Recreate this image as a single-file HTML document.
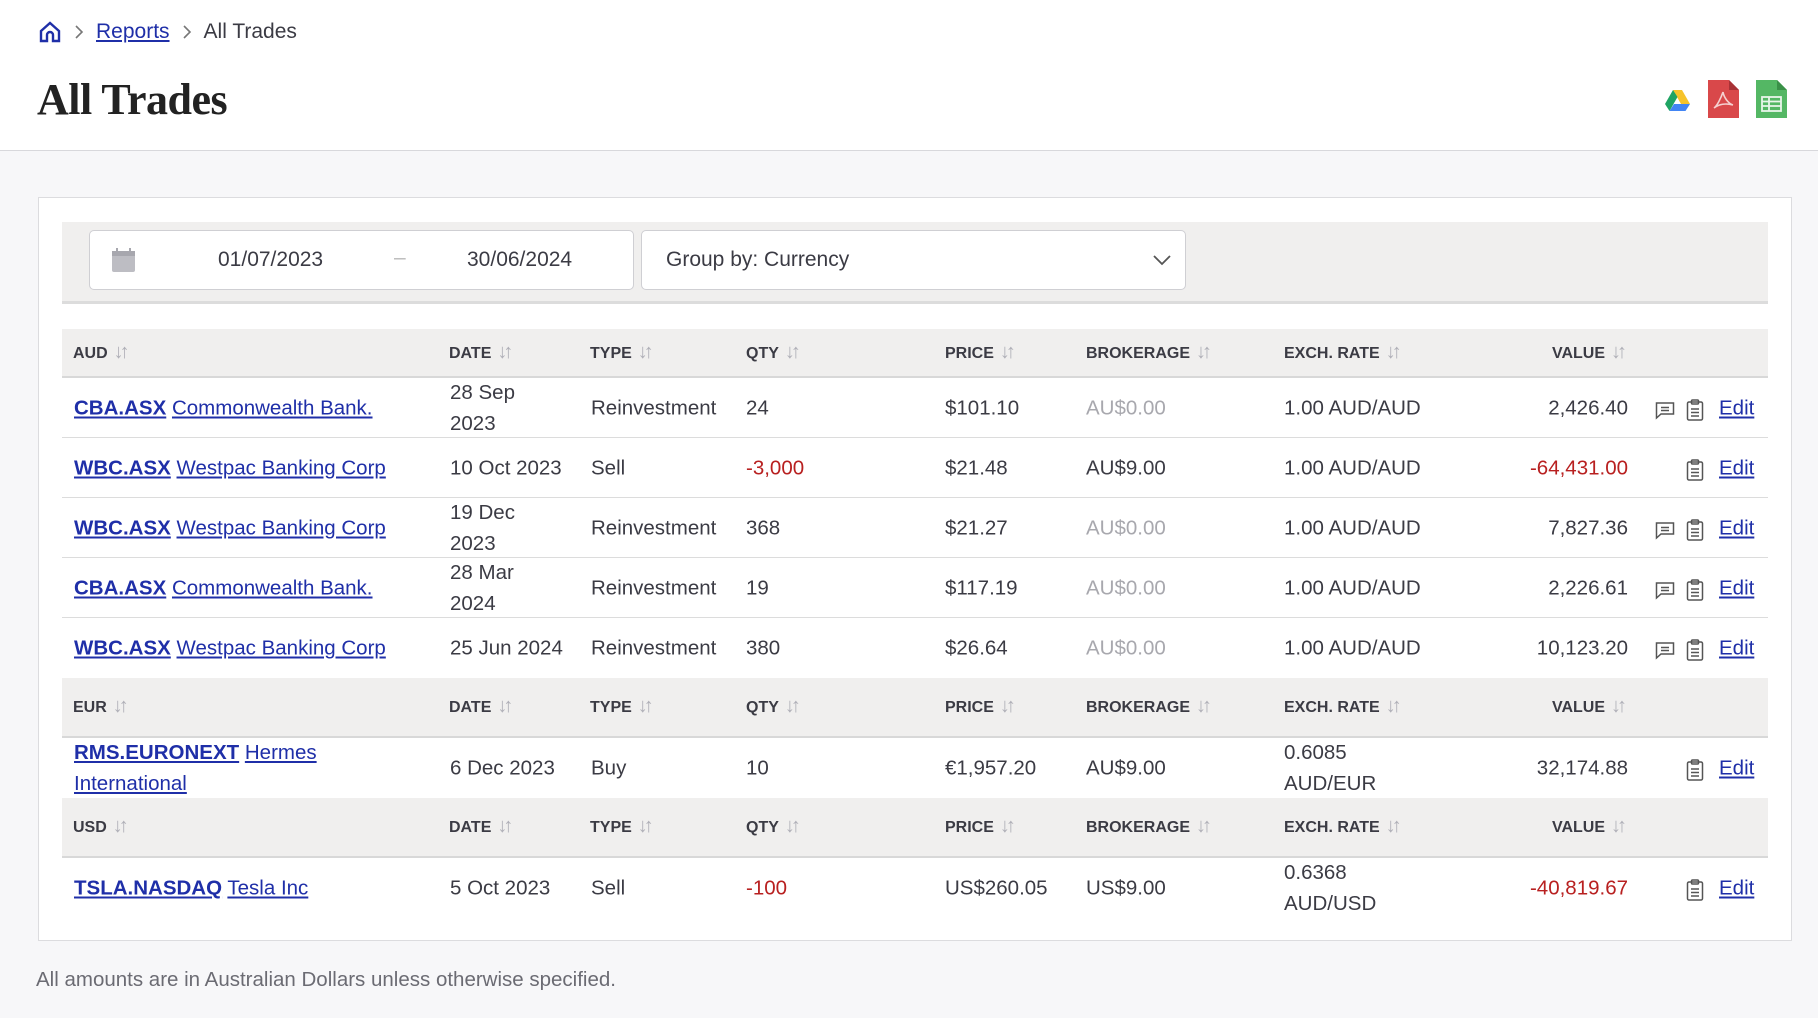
<!DOCTYPE html>
<html><head><meta charset="utf-8"><style>
*{box-sizing:border-box;margin:0;padding:0}
body{width:1818px;height:1018px;background:#f7f7f9;font-family:"Liberation Sans",sans-serif;color:#3b3b44;position:relative;overflow:hidden}
.top{position:absolute;left:0;top:0;width:1818px;height:151px;background:#fff;border-bottom:1px solid #d8d8dc}
.bc{position:absolute;left:38px;top:20px;font-size:21px;display:flex;align-items:center;gap:12px;color:#3b3b44}
a{color:#1f2fa8;text-decoration:underline}
h1{position:absolute;left:37px;top:74px;font-family:"Liberation Serif",serif;font-size:44px;font-weight:bold;color:#222;letter-spacing:-0.5px}
.card{position:absolute;left:38px;top:197px;width:1754px;height:744px;background:#fff;border:1px solid #dcdcdf}
.fbar{position:absolute;left:23px;top:24px;width:1706px;height:82px;background:#f0efee;border-bottom:3px solid #dcdcdc}
.inp{position:absolute;top:8px;height:60px;background:#fff;border:1px solid #cfcfd3;border-radius:5px;font-size:21px;color:#3b3b44}
.row{position:absolute;left:23px;width:1706px;font-size:20.5px;color:#3b3b44}
.hd{background:#f0efee;border-bottom:2px solid #d8d8d8;font-size:16px;font-weight:bold;color:#3b3b44}
.dr{border-bottom:1px solid #dcdcdc;background:#fff}
.c{position:absolute;top:50%;transform:translateY(-50%);line-height:31px}
.s{color:#b0b0b8;font-weight:normal;font-size:20px;margin-left:6px;letter-spacing:-4px}
.red{color:#b82020}.muted{color:#a8a8ae}
.r{text-align:right}
b a{font-weight:bold}
</style></head><body>
<div class="top">
<div class="bc"><svg width="24" height="24" viewBox="0 0 24 24" fill="none" stroke="#1f2fa8" stroke-width="2.4"><path d="M3 11L12 3l9 8v10h-6v-6a3 3 0 0 0-6 0v6H3z"/></svg><svg width="10" height="16" viewBox="0 0 10 16" fill="none" stroke="#777" stroke-width="1.6"><path d="M2 2l6 6-6 6"/></svg><a>Reports</a><svg width="10" height="16" viewBox="0 0 10 16" fill="none" stroke="#777" stroke-width="1.6"><path d="M2 2l6 6-6 6"/></svg><span>All Trades</span></div>
<h1>All Trades</h1>
<svg style="position:absolute;left:1665px;top:90px" width="25" height="22" viewBox="0 0 25 22"><path d="M8 0h9l8 14h-9z" fill="#f6c32a"/><path d="M8 0L0 14l4.5 7L12.5 7z" fill="#1fa463"/><path d="M4.5 21h16l4.5-7H9z" fill="#4285f4"/></svg>
<svg style="position:absolute;left:1708px;top:80px" width="31" height="38" viewBox="0 0 31 38"><path d="M0 0h21l10 10v28H0z" fill="#d9484a"/><path d="M21 0v10h10z" fill="#a83236"/><path d="M15 12c-2 6-6 14-9 16M15 12c1 6 6 12 10 13M6 28c5-4 12-5 19-3" stroke="#f5d0d0" stroke-width="1.6" fill="none"/></svg>
<svg style="position:absolute;left:1756px;top:80px" width="31" height="38" viewBox="0 0 31 38"><path d="M0 0h21l10 10v28H0z" fill="#54b764"/><path d="M21 0v10h10z" fill="#3a9148"/><rect x="6" y="17" width="19" height="14" fill="none" stroke="#e8f5ea" stroke-width="1.8"/><path d="M6 21.5h19M6 26h19M13 17v14" stroke="#e8f5ea" stroke-width="1.8"/></svg>
</div>
<div class="card">
<div class="fbar">
<div class="inp" style="left:27px;width:545px">
<svg style="position:absolute;left:22px;top:17px" width="23" height="24" viewBox="0 0 23 24"><rect x="0" y="3" width="23" height="21" rx="2" fill="#bdbdc3"/><rect x="0" y="3" width="23" height="5" fill="#a7a7ae"/><rect x="4" y="0" width="2" height="5" fill="#a7a7ae"/><rect x="17" y="0" width="2" height="5" fill="#a7a7ae"/></svg>
<span style="position:absolute;left:128px;top:17px">01/07/2023</span>
<span style="position:absolute;left:304px;top:15px;color:#bbb">–</span>
<span style="position:absolute;left:377px;top:17px">30/06/2024</span></div>
<div class="inp" style="left:579px;width:545px"><span style="position:absolute;left:24px;top:17px">Group by: Currency</span>
<svg style="position:absolute;right:14px;top:24px" width="18" height="11" viewBox="0 0 18 11" fill="none" stroke="#555" stroke-width="1.8"><path d="M1 1l8 8 8-8"/></svg></div>
</div>
<div class="row hd" style="top:131px;height:49px"><span class="c" style="left:11px">AUD<span class="s">↓↑</span></span><span class="c" style="left:387px">DATE<span class="s">↓↑</span></span><span class="c" style="left:528px">TYPE<span class="s">↓↑</span></span><span class="c" style="left:684px">QTY<span class="s">↓↑</span></span><span class="c" style="left:883px">PRICE<span class="s">↓↑</span></span><span class="c" style="left:1024px">BROKERAGE<span class="s">↓↑</span></span><span class="c" style="left:1222px">EXCH. RATE<span class="s">↓↑</span></span><span class="c r" style="right:145px">VALUE<span class="s">↓↑</span></span></div>

<div class="row dr" style="top:180px;height:60px"><span class="c" style="left:12px"><b><a>CBA.ASX</a></b> <a>Commonwealth Bank.</a></span><span class="c" style="left:388px">28 Sep<br>2023</span><span class="c" style="left:529px">Reinvestment</span><span class="c" style="left:684px">24</span><span class="c" style="left:883px">$101.10</span><span class="c muted" style="left:1024px">AU$0.00</span><span class="c" style="left:1222px">1.00 AUD/AUD</span><span class="c" style="right:140px">2,426.40</span><span class="c" style="left:1593px">CM</span><span class="c" style="left:1624px">CB</span><span class="c" style="left:1657px"><a>Edit</a></span></div>
<div class="row dr" style="top:240px;height:60px"><span class="c" style="left:12px"><b><a>WBC.ASX</a></b> <a>Westpac Banking Corp</a></span><span class="c" style="left:388px">10 Oct 2023</span><span class="c" style="left:529px">Sell</span><span class="c red" style="left:684px">-3,000</span><span class="c" style="left:883px">$21.48</span><span class="c" style="left:1024px">AU$9.00</span><span class="c" style="left:1222px">1.00 AUD/AUD</span><span class="c red" style="right:140px">-64,431.00</span><span class="c" style="left:1624px">CB</span><span class="c" style="left:1657px"><a>Edit</a></span></div>
<div class="row dr" style="top:300px;height:60px"><span class="c" style="left:12px"><b><a>WBC.ASX</a></b> <a>Westpac Banking Corp</a></span><span class="c" style="left:388px">19 Dec<br>2023</span><span class="c" style="left:529px">Reinvestment</span><span class="c" style="left:684px">368</span><span class="c" style="left:883px">$21.27</span><span class="c muted" style="left:1024px">AU$0.00</span><span class="c" style="left:1222px">1.00 AUD/AUD</span><span class="c" style="right:140px">7,827.36</span><span class="c" style="left:1593px">CM</span><span class="c" style="left:1624px">CB</span><span class="c" style="left:1657px"><a>Edit</a></span></div>
<div class="row dr" style="top:360px;height:60px"><span class="c" style="left:12px"><b><a>CBA.ASX</a></b> <a>Commonwealth Bank.</a></span><span class="c" style="left:388px">28 Mar<br>2024</span><span class="c" style="left:529px">Reinvestment</span><span class="c" style="left:684px">19</span><span class="c" style="left:883px">$117.19</span><span class="c muted" style="left:1024px">AU$0.00</span><span class="c" style="left:1222px">1.00 AUD/AUD</span><span class="c" style="right:140px">2,226.61</span><span class="c" style="left:1593px">CM</span><span class="c" style="left:1624px">CB</span><span class="c" style="left:1657px"><a>Edit</a></span></div>
<div class="row dr" style="top:420px;height:60px;border-bottom:none"><span class="c" style="left:12px"><b><a>WBC.ASX</a></b> <a>Westpac Banking Corp</a></span><span class="c" style="left:388px">25 Jun 2024</span><span class="c" style="left:529px">Reinvestment</span><span class="c" style="left:684px">380</span><span class="c" style="left:883px">$26.64</span><span class="c muted" style="left:1024px">AU$0.00</span><span class="c" style="left:1222px">1.00 AUD/AUD</span><span class="c" style="right:140px">10,123.20</span><span class="c" style="left:1593px">CM</span><span class="c" style="left:1624px">CB</span><span class="c" style="left:1657px"><a>Edit</a></span></div>

<div class="row hd" style="top:480px;height:60px"><span class="c" style="left:11px">EUR<span class="s">↓↑</span></span><span class="c" style="left:387px">DATE<span class="s">↓↑</span></span><span class="c" style="left:528px">TYPE<span class="s">↓↑</span></span><span class="c" style="left:684px">QTY<span class="s">↓↑</span></span><span class="c" style="left:883px">PRICE<span class="s">↓↑</span></span><span class="c" style="left:1024px">BROKERAGE<span class="s">↓↑</span></span><span class="c" style="left:1222px">EXCH. RATE<span class="s">↓↑</span></span><span class="c r" style="right:145px">VALUE<span class="s">↓↑</span></span></div>
<div class="row dr" style="top:540px;height:60px;border-bottom:none"><span class="c" style="left:12px"><b><a>RMS.EURONEXT</a></b> <a>Hermes</a><br><a>International</a></span><span class="c" style="left:388px">6 Dec 2023</span><span class="c" style="left:529px">Buy</span><span class="c" style="left:684px">10</span><span class="c" style="left:883px">€1,957.20</span><span class="c" style="left:1024px">AU$9.00</span><span class="c" style="left:1222px">0.6085<br>AUD/EUR</span><span class="c" style="right:140px">32,174.88</span><span class="c" style="left:1624px">CB</span><span class="c" style="left:1657px"><a>Edit</a></span></div>

<div class="row hd" style="top:600px;height:60px"><span class="c" style="left:11px">USD<span class="s">↓↑</span></span><span class="c" style="left:387px">DATE<span class="s">↓↑</span></span><span class="c" style="left:528px">TYPE<span class="s">↓↑</span></span><span class="c" style="left:684px">QTY<span class="s">↓↑</span></span><span class="c" style="left:883px">PRICE<span class="s">↓↑</span></span><span class="c" style="left:1024px">BROKERAGE<span class="s">↓↑</span></span><span class="c" style="left:1222px">EXCH. RATE<span class="s">↓↑</span></span><span class="c r" style="right:145px">VALUE<span class="s">↓↑</span></span></div>
<div class="row dr" style="top:660px;height:60px;border-bottom:none"><span class="c" style="left:12px"><b><a>TSLA.NASDAQ</a></b> <a>Tesla Inc</a></span><span class="c" style="left:388px">5 Oct 2023</span><span class="c" style="left:529px">Sell</span><span class="c red" style="left:684px">-100</span><span class="c" style="left:883px">US$260.05</span><span class="c" style="left:1024px">US$9.00</span><span class="c" style="left:1222px">0.6368<br>AUD/USD</span><span class="c red" style="right:140px">-40,819.67</span><span class="c" style="left:1624px">CB</span><span class="c" style="left:1657px"><a>Edit</a></span></div>
</div>
<div style="position:absolute;left:36px;top:968px;font-size:20.5px;color:#6b6b73">All amounts are in Australian Dollars unless otherwise specified.</div>
<script>
document.querySelectorAll('.c').forEach(function(e){
 if(e.textContent==='CM'){e.innerHTML='<svg width="20" height="20" viewBox="0 0 20 20" fill="none" stroke="#555" stroke-width="1.5" style="display:block;margin-top:4px"><path d="M1.5 3h17v11H6l-4.5 4z"/><path d="M6 7.5h8M6 10.5h8"/></svg>';}
 if(e.textContent==='CB'){e.innerHTML='<svg width="18" height="22" viewBox="0 0 18 22" fill="none" stroke="#555" stroke-width="1.5" style="display:block;margin-top:4px"><rect x="1.5" y="3" width="15" height="18" rx="1.5"/><rect x="5.5" y="1" width="7" height="4" rx="1"/><path d="M5 10h8M5 13.5h8M5 17h8"/></svg>';}
});
</script>
</body></html>
